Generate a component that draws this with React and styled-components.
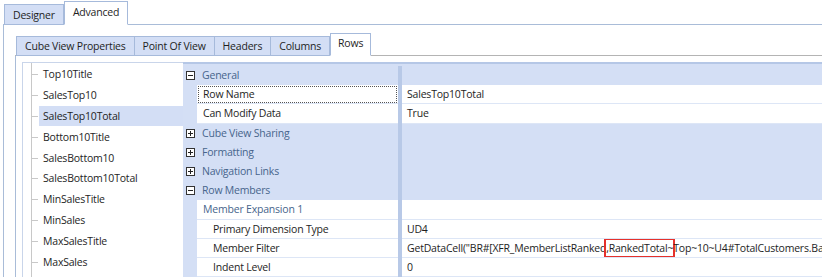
import React from 'react';
import styled, { createGlobalStyle } from 'styled-components';

const Global = createGlobalStyle`
    html, body {
        margin: 0;
        padding: 0;
        background: #ffffff;
        overflow: hidden;
    }
    body {
        font-family: "Open Sans", "Noto Sans", sans-serif;
        font-size: 10.5px;
        letter-spacing: -0.2px;
        color: #1e1e1e;
    }
`

const Page = styled.div`
    width: 822px;
    height: 277px;
    padding-left: 3px;
    box-sizing: border-box;
    overflow: hidden;
`

const TabStrip = styled.div`
    display: flex;
    align-items: flex-end;
    height: ${p => p.$height}px;
    padding-left: ${p => p.$indent}px;
    border-bottom: 1px solid ${p => p.$line};
    box-sizing: border-box;
`

const Tab = styled.div`
    display: flex;
    align-items: center;
    justify-content: center;
    box-sizing: border-box;
    height: ${p => (p.$active ? p.$h + 3 : p.$h)}px;
    padding: 0 ${p => p.$pad}px ${p => (p.$active ? 3 : 0)}px;
    margin-bottom: -1px;
    border: 1px solid #a6badb;
    border-left-width: ${p => (p.$first || p.$active ? 1 : 0)}px;
    border-bottom: ${p => (p.$active ? '1px solid #ffffff' : '1px solid #a6badb')};
    background: ${p => (p.$active ? '#ffffff' : '#d3def5')};
    color: #1e1e1e;
    white-space: nowrap;
`

const Frame = styled.div`
    border-left: 1px solid ${p => p.$line};
    padding: ${p => p.$top}px 0 0 ${p => p.$left}px;
    height: 100%;
    box-sizing: border-box;
`

const Body = styled.div`
    display: flex;
    height: 260px;
`

const Tree = styled.div`
    position: relative;
    width: 161px;
    flex-shrink: 0;
    border: 1px solid #c9d5ea;
    border-right: none;
    background: #ffffff;
    box-sizing: border-box;
    padding-top: 1px;

    &::before {
        content: '';
        position: absolute;
        left: 8px;
        top: 0;
        bottom: 0;
        border-left: 1px solid #c8c8c8;
    }
`

const TreeItem = styled.div`
    position: relative;
    height: 20.8px;
    display: flex;
    align-items: center;
    margin-left: 16px;
    padding-left: 4px;
    background: ${p => (p.$selected ? '#d3def5' : 'transparent')};

    &::before {
        content: '';
        position: absolute;
        left: -8px;
        top: 50%;
        width: 7px;
        border-top: 1px solid #c8c8c8;
    }
`

const Grid = styled.div`
    flex: 1;
    border-top: 2px solid #b5c7e6;
    background: #d4dff5;
    padding-top: 2px;
    overflow: hidden;
`

const Row = styled.div`
    display: flex;
    height: 19.2px;
    box-sizing: border-box;
    white-space: nowrap;
`

const Gutter = styled.div`
    width: 14px;
    flex-shrink: 0;
    display: flex;
    align-items: center;
    justify-content: center;
`

const NameCell = styled.div`
    position: relative;
    width: 201px;
    flex-shrink: 0;
    display: flex;
    align-items: center;
    box-sizing: border-box;
    padding-left: ${p => p.$indent}px;
    background: ${p => (p.$category ? 'transparent' : '#ffffff')};
    border-bottom: 1px solid ${p => (p.$category ? 'transparent' : '#dde6f6')};
    color: ${p => (p.$category || p.$sub ? '#47658c' : '#1e1e1e')};
    outline: ${p => (p.$focus ? '1px dotted #555' : 'none')};
    outline-offset: -2px;
`

const Splitter = styled.div`
    width: 4px;
    flex-shrink: 0;
    background: #b8c9e7;
`

const ValueCell = styled.div`
    flex: 1;
    display: flex;
    align-items: center;
    padding-left: 5px;
    background: ${p => (p.$category ? 'transparent' : '#ffffff')};
    border-bottom: 1px solid ${p => (p.$category ? 'transparent' : '#dde6f6')};
    overflow: hidden;
`

const Mark = styled.span`
    border: 2px solid #e5312c;
    padding: 1px 0;
    margin: 0 -2px;
`

const ToggleBox = ({ open }) => (
    <svg width="9" height="9" viewBox="0 0 9 9">
        <rect x="0.5" y="0.5" width="8" height="8" fill="#ffffff" stroke="#333" />
        <line x1="2" y1="4.5" x2="7" y2="4.5" stroke="#222" />
        {!open && <line x1="4.5" y1="2" x2="4.5" y2="7" stroke="#222" />}
    </svg>
)

const treeItems = [
    'Top10Title', 'SalesTop10', 'SalesTop10Total', 'Bottom10Title', 'SalesBottom10',
    'SalesBottom10Total', 'MinSalesTitle', 'MinSales', 'MaxSalesTitle', 'MaxSales',
]

const rows = [
    { type: 'cat', name: 'General', open: true },
    { name: 'Row Name', value: 'SalesTop10Total', focus: true },
    { name: 'Can Modify Data', value: 'True' },
    { type: 'cat', name: 'Cube View Sharing' },
    { type: 'cat', name: 'Formatting' },
    { type: 'cat', name: 'Navigation Links' },
    { type: 'cat', name: 'Row Members', open: true },
    { type: 'sub', name: 'Member Expansion 1', value: '' },
    { name: 'Primary Dimension Type', value: 'UD4', indent: 16 },
    {
        name: 'Member Filter', indent: 16,
        value: (
            <span>GetDataCell("BR#[XFR_MemberListRanked<Mark>,RankedTotal~</Mark>Top~10~U4#TotalCustomers.Base</span>
        ),
    },
    { name: 'Indent Level', value: '0', indent: 16 },
]

const App = () => {
    return (
        <Page>
            <Global />
            <TabStrip $height={25} $indent={1} $line="#a9bcd8">
                <Tab $first $h={21} $pad={8}>Designer</Tab>
                <Tab $active $h={21} $pad={8}>Advanced</Tab>
            </TabStrip>
            <Frame $line="#a9bcd8" $top={10} $left={11}>
                <TabStrip $height={21} $indent={1} $line="#b4b4b4">
                    <Tab $first $h={20} $pad={8}>Cube View Properties</Tab>
                    <Tab $h={20} $pad={8}>Point Of View</Tab>
                    <Tab $h={20} $pad={8}>Headers</Tab>
                    <Tab $h={20} $pad={8}>Columns</Tab>
                    <Tab $active $h={20} $pad={7}>Rows</Tab>
                </TabStrip>
                <Frame $line="#a9bcd8" $top={6} $left={6}>
                    <Body>
                        <Tree>
                            {treeItems.map(item => (
                                <TreeItem key={item} $selected={item === 'SalesTop10Total'}>{item}</TreeItem>
                            ))}
                        </Tree>
                        <Grid>
                            {rows.map(r => {
                                const cat = r.type === 'cat'
                                return (
                                    <Row key={r.name}>
                                        <Gutter>{cat && <ToggleBox open={r.open} />}</Gutter>
                                        <NameCell
                                            $category={cat}
                                            $sub={r.type === 'sub'}
                                            $focus={r.focus}
                                            $indent={cat ? 5 : r.indent || 6}
                                        >
                                            {r.name}
                                        </NameCell>
                                        <Splitter />
                                        <ValueCell $category={cat}>{r.value}</ValueCell>
                                    </Row>
                                )
                            })}
                        </Grid>
                    </Body>
                </Frame>
            </Frame>
        </Page>
    )
}

export default App
